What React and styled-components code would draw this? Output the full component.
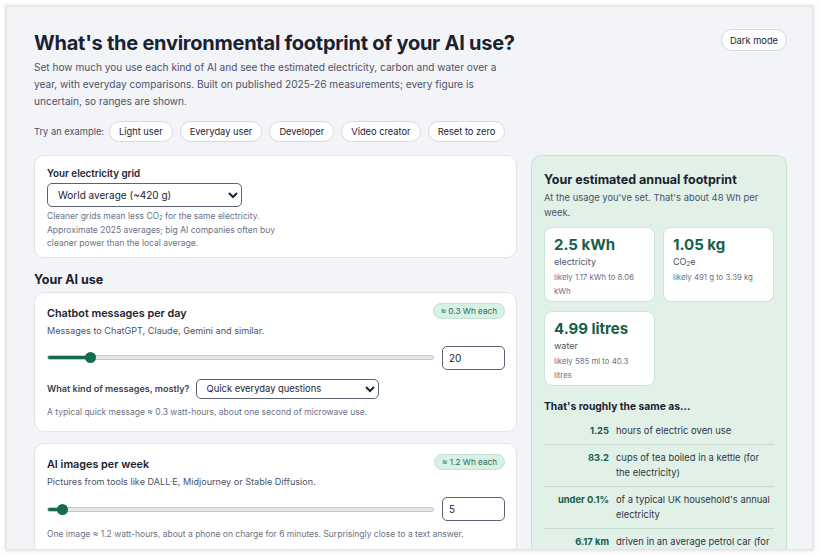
import React, { useState } from "react";
import styled, { createGlobalStyle } from "styled-components";

const GlobalStyle = createGlobalStyle`
  * { box-sizing: border-box; }
  body {
    margin: 0;
    background: #ffffff;
    font-family: Inter, "Noto Sans", "Liberation Sans", sans-serif;
    color: #1c2433;
  }
`;

const Frame = styled.div`
  margin: 7px;
  width: 805px;
  height: 542px;
  overflow: hidden;
  background: #f3f4f8;
  box-shadow: 0 0 3px 2px rgba(0, 0, 0, 0.13);
  padding: 22px 25px 0 27px;
`;

const Header = styled.header`
  display: flex;
  justify-content: space-between;
  align-items: flex-start;
`;

const Title = styled.h1`
  margin: 2px 0 0;
  font-size: 20px;
  line-height: 24px;
  font-weight: 700;
  letter-spacing: -0.25px;
  color: #1a2232;
`;

const Intro = styled.p`
  margin: 4px 0 0;
  max-width: 470px;
  font-size: 10.1px;
  line-height: 17px;
  color: #4a5366;
`;

const PillButton = styled.button`
  font-family: inherit;
  font-size: 9.3px;
  color: #1c2433;
  background: #fff;
  border: 1px solid #d5d9e2;
  border-radius: 11px;
  height: ${(p) => (p.tall ? "22px" : "21px")};
  padding: 0 ${(p) => (p.tall ? "8px" : "9px")};
  cursor: pointer;
`;

const Examples = styled.div`
  display: flex;
  align-items: center;
  gap: 7px;
  margin: 11px 0 13px;
  font-size: 9.3px;
  color: #4a5366;
`;

const ExampleLabel = styled.span`
  margin-right: -2px;
`;

const Main = styled.div`
  display: grid;
  grid-template-columns: 483px 256px;
  gap: 14px;
  align-items: start;
`;

const Column = styled.div`
  display: flex;
  flex-direction: column;
  gap: 11px;
`;

const Card = styled.section`
  background: #fff;
  border: 1px solid #e1e4eb;
  border-radius: 10px;
  padding: 12px 11px ${(p) => (p.compact ? "6px" : "12px")} 12px;
`;

const FieldLabel = styled.div`
  font-size: 9.8px;
  font-weight: 600;
  color: #1c2433;
  margin: 0 0 4px;
`;

const Select = styled.select`
  font-family: inherit;
  font-size: ${(p) => (p.small ? "9.4px" : "10px")};
  color: #1c2433;
  background: #fff;
  border: 1px solid #5a6275;
  border-radius: 5px;
  width: ${(p) => p.w}px;
  height: ${(p) => (p.small ? "20px" : "24px")};
  padding: 0 6px;
`;

const Help = styled.p`
  margin: ${(p) => (p.tight ? "3px" : "7px")} 0 0;
  font-size: 8.5px;
  line-height: 13.5px;
  color: #6b7385;
  max-width: ${(p) => (p.narrow ? "232px" : "none")};
`;

const SectionTitle = styled.h2`
  margin: 3px 0 -7px;
  font-size: 12.5px;
  line-height: 16px;
  font-weight: 700;
  color: #1a2232;
`;

const CardHead = styled.div`
  display: flex;
  justify-content: space-between;
  align-items: center;
`;

const CardTitle = styled.h3`
  margin: 2px 0 0;
  font-size: 10.8px;
  font-weight: 600;
  color: #1a2232;
`;

const Badge = styled.span`
  font-size: 8.2px;
  color: #2a6b50;
  background: #d9f0e4;
  border: 1px solid #c2e3d1;
  border-radius: 9px;
  padding: 2px 7px;
  margin-top: -3px;
`;

const Desc = styled.p`
  margin: 5px 0 0;
  font-size: 9.1px;
  color: #4a5366;
`;

const SliderRow = styled.div`
  display: flex;
  align-items: center;
  gap: 8px;
  margin-top: 10px;
`;

const Range = styled.input`
  -webkit-appearance: none;
  appearance: none;
  flex: 1;
  height: 5px;
  margin: 0;
  border-radius: 3px;
  border: 1px solid #c4c7cd;
  outline: none;
  &::-webkit-slider-thumb {
    -webkit-appearance: none;
    width: 11px;
    height: 11px;
    border-radius: 50%;
    background: #176a50;
    cursor: pointer;
  }
`;

const NumberBox = styled.input`
  font-family: inherit;
  width: 63px;
  height: 24px;
  font-size: 10px;
  color: #1c2433;
  border: 1px solid #5a6275;
  border-radius: 5px;
  padding: 0 6px;
`;

const KindRow = styled.div`
  display: flex;
  align-items: center;
  gap: 6px;
  margin-top: 9px;
  font-size: 9.1px;
  font-weight: 600;
  color: #3a4253;
`;

const Panel = styled.aside`
  background: #e1f1e8;
  border: 1px solid #c6e3d3;
  border-radius: 10px;
  padding: 16px 12px 12px 12px;
  min-height: 420px;
`;

const PanelTitle = styled.h2`
  margin: 0 0 3px;
  font-size: 12.5px;
  font-weight: 700;
  color: #1a2232;
`;

const PanelSub = styled.p`
  margin: 0 0 7px;
  font-size: 9.4px;
  line-height: 15px;
  color: #4a5366;
`;

const Stats = styled.div`
  display: grid;
  grid-template-columns: 111px 111px;
  gap: 9px 8px;
`;

const Stat = styled.div`
  background: #fff;
  border: 1px solid #cbe6d7;
  border-radius: 8px;
  padding: 7px 9px;
  height: 75px;
`;

const StatValue = styled.div`
  font-size: 15px;
  font-weight: 700;
  color: #166047;
`;

const StatLabel = styled.div`
  font-size: 9px;
  color: #4a5366;
  margin-top: 2px;
`;

const StatRange = styled.div`
  font-size: 7.8px;
  line-height: 14px;
  color: #6b7385;
  margin-top: 3px;
`;

const CompareTitle = styled.h3`
  margin: 14px 0 6px;
  font-size: 10.3px;
  font-weight: 700;
  color: #1a2232;
`;

const CompareRow = styled.div`
  display: grid;
  grid-template-columns: 65px 1fr;
  gap: 7px;
  padding: 5px 0 5px;
  border-top: ${(p) => (p.first ? "none" : "1px solid #c8ddd1")};
  font-size: 9.4px;
  line-height: 15.5px;
  color: #2e3647;
`;

const CompareNum = styled.span`
  text-align: right;
  font-weight: 700;
  color: #166047;
`;

const Sub = styled.sub`
  font-size: 0.7em;
  line-height: 0;
  vertical-align: -0.2em;
`;

function Slider({ value, max }) {
  const pct = (value / max) * 100;
  return (
    <Range
      type="range"
      min="0"
      max={max}
      defaultValue={value}
      style={{
        background: `linear-gradient(to right, #176a50 ${pct}%, #e4e5e8 ${pct}%)`,
      }}
    />
  );
}

const comparisons = [
  ["1.25", "hours of electric oven use"],
  ["83.2", "cups of tea boiled in a kettle (for the electricity)"],
  ["under 0.1%", "of a typical UK household's annual electricity"],
  ["6.17 km", "driven in an average petrol car (for the carbon)"],
];

export default function App() {
  const [chat] = useState(20);
  const [images] = useState(5);

  return (
    <>
      <GlobalStyle />
      <Frame>
        <Header>
          <div>
            <Title>What's the environmental footprint of your AI use?</Title>
            <Intro>
              Set how much you use each kind of AI and see the estimated
              electricity, carbon and water over a year, with everyday
              comparisons. Built on published 2025-26 measurements; every figure
              is uncertain, so ranges are shown.
            </Intro>
          </div>
          <PillButton tall>Dark mode</PillButton>
        </Header>

        <Examples>
          <ExampleLabel>Try an example:</ExampleLabel>
          <PillButton>Light user</PillButton>
          <PillButton>Everyday user</PillButton>
          <PillButton>Developer</PillButton>
          <PillButton>Video creator</PillButton>
          <PillButton>Reset to zero</PillButton>
        </Examples>

        <Main>
          <Column>
            <Card compact>
              <FieldLabel>Your electricity grid</FieldLabel>
              <Select w={195} defaultValue="world">
                <option value="world">World average (~420 g)</option>
              </Select>
              <Help narrow tight>
                Cleaner grids mean less CO<Sub>2</Sub> for the same electricity.
                Approximate 2025 averages; big AI companies often buy cleaner
                power than the local average.
              </Help>
            </Card>

            <SectionTitle>Your AI use</SectionTitle>

            <Card>
              <CardHead>
                <CardTitle>Chatbot messages per day</CardTitle>
                <Badge>≈ 0.3 Wh each</Badge>
              </CardHead>
              <Desc>Messages to ChatGPT, Claude, Gemini and similar.</Desc>
              <SliderRow>
                <Slider value={chat} max={200} />
                <NumberBox type="number" defaultValue={chat} />
              </SliderRow>
              <KindRow>
                What kind of messages, mostly?
                <Select small w={183} defaultValue="quick">
                  <option value="quick">Quick everyday questions</option>
                </Select>
              </KindRow>
              <Help>
                A typical quick message ≈ 0.3 watt-hours, about one second of
                microwave use.
              </Help>
            </Card>

            <Card>
              <CardHead>
                <CardTitle>AI images per week</CardTitle>
                <Badge>≈ 1.2 Wh each</Badge>
              </CardHead>
              <Desc>
                Pictures from tools like DALL·E, Midjourney or Stable Diffusion.
              </Desc>
              <SliderRow>
                <Slider value={images} max={200} />
                <NumberBox type="number" defaultValue={images} />
              </SliderRow>
              <Help>
                One image ≈ 1.2 watt-hours, about a phone on charge for 6
                minutes. Surprisingly close to a text answer.
              </Help>
            </Card>
          </Column>

          <Panel>
            <PanelTitle>Your estimated annual footprint</PanelTitle>
            <PanelSub>
              At the usage you've set. That's about 48 Wh per week.
            </PanelSub>
            <Stats>
              <Stat>
                <StatValue>2.5 kWh</StatValue>
                <StatLabel>electricity</StatLabel>
                <StatRange>likely 1.17 kWh to 8.06 kWh</StatRange>
              </Stat>
              <Stat>
                <StatValue>1.05 kg</StatValue>
                <StatLabel>
                  CO<Sub>2</Sub>e
                </StatLabel>
                <StatRange>likely 491 g to 3.39 kg</StatRange>
              </Stat>
              <Stat>
                <StatValue>4.99 litres</StatValue>
                <StatLabel>water</StatLabel>
                <StatRange>likely 585 ml to 40.3 litres</StatRange>
              </Stat>
            </Stats>
            <CompareTitle>That's roughly the same as...</CompareTitle>
            {comparisons.map(([n, t], i) => (
              <CompareRow key={n} first={i === 0}>
                <CompareNum>{n}</CompareNum>
                <span>{t}</span>
              </CompareRow>
            ))}
          </Panel>
        </Main>
      </Frame>
    </>
  );
}
